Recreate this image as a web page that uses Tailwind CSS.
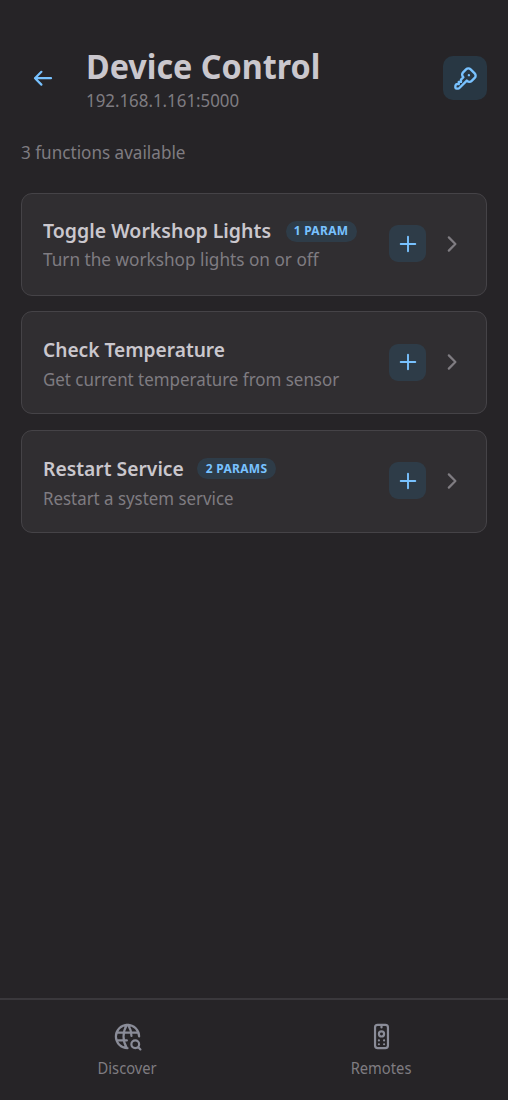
<!DOCTYPE html>
<html lang="en">
<head>
<meta charset="utf-8">
<title>Device Control</title>
<script src="https://cdn.jsdelivr.net/npm/@tailwindcss/browser@4"></script>
</head>
<body class="bg-[#262427] text-[#cac7cd] font-['Noto_Sans',sans-serif]">
<div class="flex h-[1100px] w-[508px] flex-col overflow-hidden whitespace-nowrap">
  <header class="flex h-[129px] shrink-0 items-start pl-[32px] pr-[21px]">
    <svg class="mt-[67px] h-[22px] w-[22px] shrink-0 text-[#78c2ff]" viewBox="0 0 22 22" fill="none" stroke="currentColor" stroke-width="2.2" stroke-linecap="round" stroke-linejoin="round"><path d="M3 11.2h16M9.4 4.8 3 11.2l6.4 6.4"/></svg>
    <div class="ml-[32px] mt-[44px] flex-1">
      <h1 class="origin-left scale-x-[0.95] text-[34px] font-bold leading-[44px]">Device Control</h1>
      <p class="origin-left scale-x-[0.937] text-[18px] leading-[24px] text-[#7f7c81]">192.168.1.161:5000</p>
    </div>
    <button class="mt-[56px] flex h-[44px] w-[44px] items-center justify-center rounded-[10px] bg-[#283743] text-[#78c2ff]">
      <svg class="h-[27px] w-[27px]" viewBox="0 0 24 24" fill="none" stroke="currentColor" stroke-width="2.1" stroke-linecap="round" stroke-linejoin="round"><path d="M16.555 3.843l3.602 3.602a2.877 2.877 0 0 1 0 4.069l-2.643 2.643a2.877 2.877 0 0 1 -4.069 0l-.301 -.301l-6.558 6.558a2 2 0 0 1 -1.239 .578l-.175 .008h-1.172a1 1 0 0 1 -.993 -.883l-.007 -.117v-1.172a2 2 0 0 1 .467 -1.284l.119 -.13l.414 -.414h2v-2h2v-2l2.144 -2.144l-.301 -.301a2.877 2.877 0 0 1 0 -4.069l2.643 -2.643a2.877 2.877 0 0 1 4.069 0zM15 9h.01"/></svg>
    </button>
  </header>
  <main class="flex flex-1 flex-col px-[21px]">
    <p class="mt-[11px] h-[53px] origin-left scale-x-[0.95] text-[18px] leading-[24px] text-[#7f7c81]">3 functions available</p>
    <div class="flex flex-col">
      <section class="flex h-[103px] items-center rounded-[11px] border-[1.5px] border-[#454347] bg-[#302e31] pl-[21px] pr-[23px]">
        <div class="flex-1">
          <div class="flex h-[30px] items-center"><h2 class="w-[229px] origin-left scale-x-[0.975] text-[20px] font-semibold">Toggle Workshop Lights</h2><span class="ml-[13.5px] flex h-[21px] w-[71px] items-center justify-center rounded-full bg-[#2e3c48] text-[12px] font-bold tracking-[0.3px] text-[#78c2ff]">1 PARAM</span></div>
          <p class="origin-left scale-x-[0.955] text-[18px] leading-[27px] text-[#7f7c81]">Turn the workshop lights on or off</p>
        </div>
        <button class="-mt-[2px] flex h-[37px] w-[37px] items-center justify-center rounded-[9px] bg-[#2e3c48] text-[#78c2ff]"><svg class="h-[22px] w-[22px]" viewBox="0 0 22 22" fill="none" stroke="currentColor" stroke-width="1.9" stroke-linecap="round"><path d="M11 3.7v14.6M3.7 11h14.6"/></svg></button>
        <svg class="-mt-[2px] ml-[15px] h-[22px] w-[22px] text-[#7f7c81]" viewBox="0 0 22 22" fill="none" stroke="currentColor" stroke-width="2.2" stroke-linecap="round" stroke-linejoin="round"><path d="m7.8 4.4 6.6 6.6-6.6 6.6"/></svg>
      </section>
      <section class="mt-[15px] flex h-[103px] items-center rounded-[11px] border-[1.5px] border-[#454347] bg-[#302e31] pl-[21px] pr-[23px]">
        <div class="flex-1 pt-[3px]">
          <div class="flex h-[30px] items-center"><h2 class="w-[182px] origin-left scale-x-[0.957] text-[20px] font-semibold">Check Temperature</h2></div>
          <p class="origin-left scale-x-[0.94] text-[18px] leading-[28px] text-[#7f7c81]">Get current temperature from sensor</p>
        </div>
        <button class="-mt-[1px] flex h-[37px] w-[37px] items-center justify-center rounded-[9px] bg-[#2e3c48] text-[#78c2ff]"><svg class="h-[22px] w-[22px]" viewBox="0 0 22 22" fill="none" stroke="currentColor" stroke-width="1.9" stroke-linecap="round"><path d="M11 3.7v14.6M3.7 11h14.6"/></svg></button>
        <svg class="-mt-[1px] ml-[15px] h-[22px] w-[22px] text-[#7f7c81]" viewBox="0 0 22 22" fill="none" stroke="currentColor" stroke-width="2.2" stroke-linecap="round" stroke-linejoin="round"><path d="m7.8 4.4 6.6 6.6-6.6 6.6"/></svg>
      </section>
      <section class="mt-[16px] flex h-[103px] items-center rounded-[11px] border-[1.5px] border-[#454347] bg-[#302e31] pl-[21px] pr-[23px]">
        <div class="flex-1 pt-[2px]">
          <div class="flex h-[30px] items-center"><h2 class="w-[140px] origin-left scale-x-[0.965] text-[20px] font-semibold">Restart Service</h2><span class="ml-[14px] flex h-[21px] w-[79px] items-center justify-center rounded-full bg-[#2e3c48] text-[12px] font-bold tracking-[0.3px] text-[#78c2ff]">2 PARAMS</span></div>
          <p class="origin-left scale-x-[0.937] text-[18px] leading-[28px] text-[#7f7c81]">Restart a system service</p>
        </div>
        <button class="-mt-[2px] flex h-[37px] w-[37px] items-center justify-center rounded-[9px] bg-[#2e3c48] text-[#78c2ff]"><svg class="h-[22px] w-[22px]" viewBox="0 0 22 22" fill="none" stroke="currentColor" stroke-width="1.9" stroke-linecap="round"><path d="M11 3.7v14.6M3.7 11h14.6"/></svg></button>
        <svg class="-mt-[2px] ml-[15px] h-[22px] w-[22px] text-[#7f7c81]" viewBox="0 0 22 22" fill="none" stroke="currentColor" stroke-width="2.2" stroke-linecap="round" stroke-linejoin="round"><path d="m7.8 4.4 6.6 6.6-6.6 6.6"/></svg>
      </section>
    </div>
  </main>
  <nav class="grid h-[102px] shrink-0 grid-cols-2 border-t-2 border-[#3a383c] pt-[21px]">
    <a class="flex flex-col items-center text-[#7f7c81]">
      <svg class="h-[31px] w-[31px] text-[#8a8c98]" viewBox="0 0 24 24" fill="none" stroke="currentColor" stroke-width="1.7" stroke-linecap="round" stroke-linejoin="round"><path d="M21 12a9 9 0 1 0 -9 9M3.6 9h16.8M3.6 15h7.9M11.5 3a17 17 0 0 0 0 18M12.5 3a16.984 16.984 0 0 1 2.574 8.62M15 18a3 3 0 1 0 6 0a3 3 0 1 0 -6 0M20.2 20.2l1.8 1.8"/></svg>
      <span class="mt-[4px] scale-x-[0.92] text-[16px] leading-[24px]">Discover</span>
    </a>
    <a class="flex flex-col items-center text-[#7f7c81]">
      <svg class="h-[31px] w-[31px] text-[#8a8c98]" viewBox="0 0 24 24" fill="none" stroke="currentColor" stroke-width="1.7" stroke-linecap="round" stroke-linejoin="round"><path d="M10 10a2 2 0 1 0 4 0a2 2 0 1 0 -4 0M7 5a2 2 0 0 1 2-2h6a2 2 0 0 1 2 2v14a2 2 0 0 1 -2 2h-6a2 2 0 0 1 -2-2zM12 3v2M10 15v.01M10 18v.01M14 18v.01M14 15v.01"/></svg>
      <span class="mt-[4px] scale-x-[0.92] text-[16px] leading-[24px]">Remotes</span>
    </a>
  </nav>
</div>
</body>
</html>
